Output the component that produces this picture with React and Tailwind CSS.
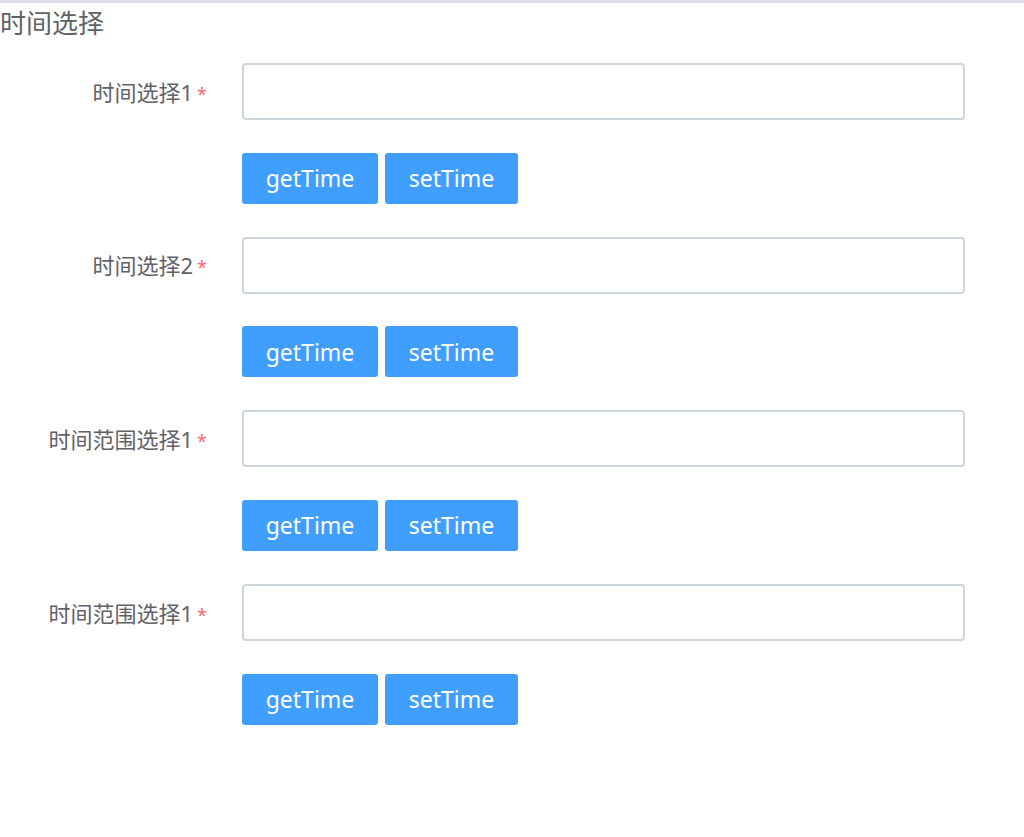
import { useState } from 'react'

const items = [
  { label: '时间选择1' },
  { label: '时间选择2' },
  { label: '时间范围选择1' },
  { label: '时间范围选择1' },
]

function FormRow({ label }) {
  const [value, setValue] = useState('')

  return (
    <div className="flex flex-col">
      {/* input line */}
      <div className="flex items-center h-[57px]">
        <div className="w-[242px] pr-[35px] flex justify-end items-center shrink-0">
          <span className="text-[22px] text-[#606266] leading-none">{label}</span>
          <span className="text-[18px] text-[#f56c6c] ml-[4px] leading-none mt-[4px]">*</span>
        </div>
        <input
          value={value}
          onChange={(e) => setValue(e.target.value)}
          className="w-[723px] h-[57px] border-2 border-[#cdd5df] rounded-[4px] px-3 text-[20px] outline-none bg-white"
        />
      </div>

      {/* buttons */}
      <div className="flex gap-[7px] pl-[242px] mt-[32.7px] mb-[33px]">
        <button className="w-[136px] h-[51px] bg-[#409eff] text-white text-[23px] rounded-[3px]">
          getTime
        </button>
        <button className="w-[133px] h-[51px] bg-[#409eff] text-white text-[23px] rounded-[3px]">
          setTime
        </button>
      </div>
    </div>
  )
}

export default function App() {
  return (
    <div
      className="min-h-screen bg-white border-t-[3px] border-[#dcdfe6]"
      style={{ fontFamily: '"Noto Sans", "Noto Sans CJK SC", sans-serif' }}
    >
      <h1 className="text-[26px] text-[#606266] font-normal leading-[38px] mt-[1px]">时间选择</h1>

      <div className="mt-[21px]">
        {items.map((it, i) => (
          <FormRow key={i} label={it.label} />
        ))}
      </div>
    </div>
  )
}
